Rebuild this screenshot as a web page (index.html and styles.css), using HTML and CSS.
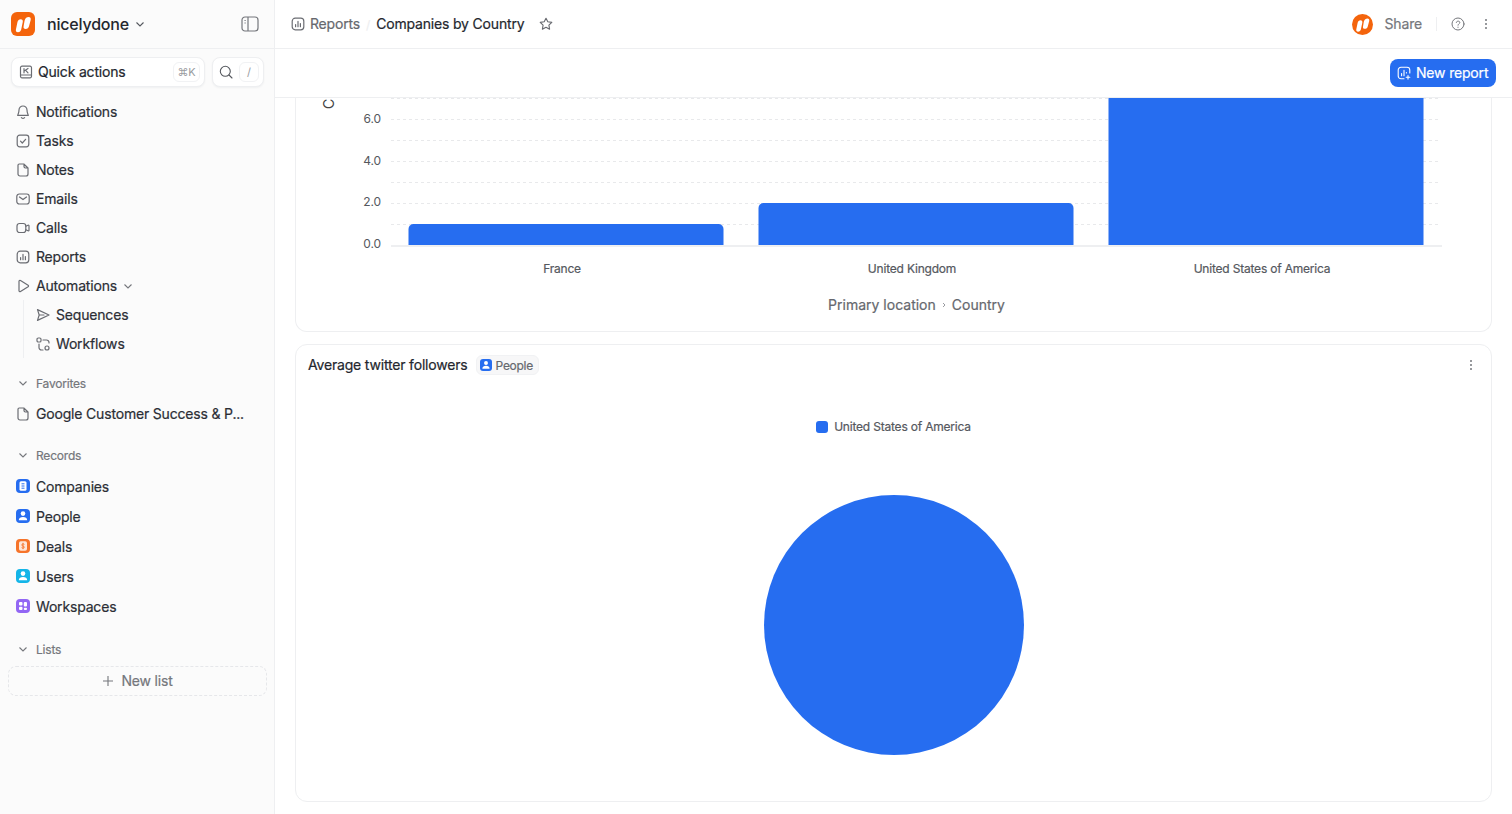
FILE: index.html
```html
<!DOCTYPE html>
<html>
<head>
    <meta charset="utf-8">
    <title>Companies by Country</title>
    <link rel="stylesheet" href="styles.css">
</head>
<body>
    <svg class="sprites" width="0" height="0">
        <defs>
            <symbol id="i-note" viewBox="0 0 14 14"><path d="M3.2 1h4.6L12 5v6a2 2 0 0 1-2 2H4a2 2 0 0 1-2-2V2.2A1.2 1.2 0 0 1 3.2 1zM8 1v2.6A1.4 1.4 0 0 0 9.4 5H12" /></symbol>
            <symbol id="i-report" viewBox="0 0 14 14"><rect x="1.2" y="1.2" width="11.6" height="11.6" rx="3" /><path d="M4.6 7.5v2.200M7 4.400v5.300M9.400 6.500v3.200" /></symbol>
            <symbol id="i-chev" viewBox="0 0 10 10"><path d="M1.500 3.500 5 7l3.500-3.500" /></symbol>
            <symbol id="i-person" viewBox="0 0 14 14"><circle cx="7" cy="4.600" r="2.300" /><path d="M2.800 11.300c0-2.200 1.800-3.300 4.200-3.300s4.200 1.100 4.200 3.300z" /></symbol>
            <symbol id="i-logo" viewBox="1.500 1.500 20 20"><path d="M7.300 18.300c-1.400 0-2-.8-1.700-2.200l1.300-6.200c.3-1.500 1.300-2.400 2.700-2.400s2 .9 1.700 2.400l-1.300 6.200c-.3 1.400-1.300 2.200-2.700 2.200zM13.700 15.600c-1.400 0-2-.9-1.700-2.300l.8-4.600c.5-2.100 2-3 3.300-3 1.500 0 2.100 1 1.800 2.400l-1.400 5.300c-.3 1.400-1.300 2.200-2.800 2.200z" /></symbol>
        </defs>
    </svg>

    <div class="app">
        <aside class="sidebar">
            <div class="workspace">
                <span class="logo"><svg><use href="#i-logo" /></svg></span>
                <span class="workspace-name">nicelydone</span>
                <svg class="chev chev-dark"><use href="#i-chev" /></svg>
                <svg class="panel-toggle" viewBox="0 0 18 16"><rect x="1" y="1" width="16" height="14" rx="3" /><path d="M7 1v14M3.500 4.500h1.200M3.500 7h1.200" /></svg>
            </div>

            <div class="quick-row">
                <div class="quick-box quick-actions">
                    <svg class="icon" viewBox="0 0 14 14"><path d="M3 1.200h8a1.500 1.500 0 0 1 1.500 1.500v8.600a1.500 1.500 0 0 1-1.500 1.500H3a1.500 1.500 0 0 1-1.500-1.500V2.700A1.500 1.500 0 0 1 3 1.200zM1.500 10h11M5 3.500v4.300M9 3.500 5.200 6M6.500 5.200 9 7.800" /></svg>
                    <span class="quick-label nudge">Quick actions</span>
                    <span class="kbd kbd-wide">⌘K</span>
                </div>
                <div class="quick-box quick-search">
                    <svg class="search-icon" viewBox="0 0 14 14"><circle cx="6.300" cy="6.300" r="5" /><path d="m10 10 3 3" /></svg>
                    <span class="kbd kbd-slash">/</span>
                </div>
            </div>

            <nav class="nav">
                <a class="nav-item"><svg class="icon" viewBox="0 0 14 14"><path d="M7 1a4 4 0 0 0-4 4c0 3.500-1.300 4.600-1.300 5.400h10.600C12.300 9.600 11 8.500 11 5a4 4 0 0 0-4-4zM5.400 12.600c.8.700 2.400.7 3.200 0" /></svg>Notifications</a>
                <a class="nav-item"><svg class="icon" viewBox="0 0 14 14"><rect x="1.200" y="1.200" width="11.600" height="11.600" rx="2.500" /><path d="m4.500 7.200 1.800 1.800 3.300-3.700" /></svg>Tasks</a>
                <a class="nav-item"><svg class="icon"><use href="#i-note" /></svg>Notes</a>
                <a class="nav-item"><svg class="icon" viewBox="0 0 14 14"><rect x=".8" y="2" width="12.400" height="10" rx="2.500" /><path d="m3.500 5 3.500 2.600L10.500 5" /></svg>Emails</a>
                <a class="nav-item"><svg class="icon" viewBox="0 0 14 14"><rect x="1" y="2.500" width="8.800" height="9" rx="2.500" /><path d="M9.800 5.300 12 4.200c.5-.2 1 .1 1 .6v4.400c0 .5-.5.800-1 .6L9.800 8.700" /></svg>Calls</a>
                <a class="nav-item"><svg class="icon"><use href="#i-report" /></svg>Reports</a>
                <a class="nav-item"><svg class="icon" viewBox="0 0 14 14"><path d="M3 2.300v9.400c0 .8.800 1.200 1.500.8l7.600-4.700c.6-.4.600-1.200 0-1.600L4.500 1.500C3.800 1.100 3 1.500 3 2.300z" /></svg>Automations<svg class="chev"><use href="#i-chev" /></svg></a>
                <div class="subnav">
                    <a class="nav-item"><svg class="icon" viewBox="0 0 14 14"><path d="M1.500 1.600 13 7 1.500 12.400 3.200 7zM3.200 7H8" /></svg>Sequences</a>
                    <a class="nav-item"><svg class="icon" viewBox="0 0 14 14"><rect x="1" y="1" width="4" height="4" rx="1.300" /><circle cx="11" cy="11" r="2" /><path d="M7 3h3.500A2.500 2.500 0 0 1 13 5.500V6M3 7v3.500A2.500 2.500 0 0 0 5.500 13H7" /></svg>Workflows</a>
                </div>
            </nav>

            <div class="section-title section-favorites"><svg class="chev"><use href="#i-chev" /></svg>Favorites</div>
            <a class="nav-item nav-fav"><svg class="icon"><use href="#i-note" /></svg><span class="ellipsis">Google Customer Success &amp; P...</span></a>

            <div class="section-title section-records"><svg class="chev"><use href="#i-chev" /></svg>Records</div>
            <div class="records">
                <a class="record"><span class="badge badge-blue"><svg viewBox="0 0 14 14"><rect x="3.500" y="2.200" width="7" height="9.600" rx="1.500" class="solid" /><path d="M5.500 4.800h3M5.500 7h3M5.500 9.200h3" class="cut" /></svg></span>Companies</a>
                <a class="record"><span class="badge badge-blue"><svg><use href="#i-person" class="solid" /></svg></span>People</a>
                <a class="record"><span class="badge badge-orange"><svg viewBox="0 0 14 14"><rect x="3" y="2.200" width="8" height="9.600" rx="1.800" class="solid-soft" /><path d="M8.400 5.400C7.800 4.700 5.700 4.700 5.700 6s2.700 .9 2.700 2.100-2.100 1.300-2.800 .5M7 3.800v6.400" class="cut-orange" /></svg></span>Deals</a>
                <a class="record"><span class="badge badge-cyan"><svg><use href="#i-person" class="solid" /></svg></span>Users</a>
                <a class="record"><span class="badge badge-purple"><svg viewBox="0 0 14 14"><rect x="3" y="3" width="3.500" height="3.500" rx="1" class="solid" /><rect x="7.800" y="3" width="3.200" height="4.500" rx="1" class="solid" /><rect x="3" y="7.800" width="3.500" height="3.200" rx="1" class="solid" /><rect x="7.800" y="8.700" width="3.200" height="2.300" rx="1" class="solid" /></svg></span>Workspaces</a>
            </div>

            <div class="section-title section-lists"><svg class="chev"><use href="#i-chev" /></svg>Lists</div>
            <div class="new-list"><svg class="plus" viewBox="0 0 12 12"><path d="M6 1v10M1 6h10" /></svg><span class="nudge">New list</span></div>
        </aside>

        <main class="main">
            <header class="topbar">
                <svg class="icon"><use href="#i-report" /></svg>
                <span class="crumb nudge">Reports</span>
                <span class="crumb-sep">/</span>
                <span class="crumb-current nudge">Companies by Country</span>
                <svg class="star" viewBox="0 0 14 14"><path d="m7 1.200 1.800 3.600 4 .6-2.900 2.800.7 4L7 10.300l-3.600 1.900.7-4L1.200 5.400l4-.6z" /></svg>
                <div class="topbar-right">
                    <span class="avatar"><svg><use href="#i-logo" /></svg></span>
                    <span class="share nudge">Share</span>
                    <span class="topbar-divider"></span>
                    <svg class="help" viewBox="0 0 14 14"><circle cx="7" cy="7" r="6" /><path d="M5.300 5.400C5.500 3.600 8.800 3.700 8.800 5.500 8.800 6.800 7 6.900 7 8.200M7 10.100v.3" /></svg>
                    <span class="dots"><i></i><i></i><i></i></span>
                </div>
            </header>

            <div class="toolbar">
                <button class="btn-primary"><svg viewBox="0 0 14 14"><path d="M7 12.800H4a2.800 2.800 0 0 1-2.800-2.800V4A2.800 2.800 0 0 1 4 1.200h6A2.800 2.800 0 0 1 12.800 4v3M4.600 7.500v2.200M7 4.400v5.300M9.400 6.500v.5M11 9.500v3.600M9.200 11.300h3.600" /></svg><span class="nudge">New report</span></button>
            </div>

            <div class="content">
                <section class="card card-chart">
                    <svg class="bar-chart" viewBox="0 0 1195 170" width="1195" height="170">
                        <text class="axis-title" transform="translate(38 6) rotate(-90)" text-anchor="middle">C</text>
                        <g class="grid">
                            <line x1="95" x2="1142" y1="0.500" y2="0.500" />
                            <line x1="95" x2="1142" y1="21.500" y2="21.500" />
                            <line x1="95" x2="1142" y1="42.500" y2="42.500" />
                            <line x1="95" x2="1142" y1="63.500" y2="63.500" />
                            <line x1="95" x2="1142" y1="84.500" y2="84.500" />
                            <line x1="95" x2="1142" y1="105.500" y2="105.500" />
                            <line x1="95" x2="1142" y1="126.500" y2="126.500" />
                        </g>
                        <line class="baseline" x1="95" x2="1146" y1="148" y2="148" />
                        <g class="y-labels">
                            <text x="85" y="25">6.0</text>
                            <text x="85" y="66.500">4.0</text>
                            <text x="85" y="108">2.0</text>
                            <text x="85" y="149.500">0.0</text>
                        </g>
                        <path class="bar" d="M112.500 147v-16a5 5 0 0 1 5-5h305a5 5 0 0 1 5 5v16z" />
                        <path class="bar" d="M462.500 147v-37a5 5 0 0 1 5-5h305a5 5 0 0 1 5 5v37z" />
                        <rect class="bar" x="812.500" y="0" width="315" height="147" />
                    </svg>
                    <div class="x-labels">
                        <span>France</span>
                        <span>United Kingdom</span>
                        <span>United States of America</span>
                    </div>
                    <div class="x-title">Primary location<svg viewBox="0 0 6 8"><path d="m2 2 2 2-2 2" /></svg>Country</div>
                </section>

                <section class="card card-pie">
                    <div class="card-head">
                        <span class="card-title nudge">Average twitter followers</span>
                        <span class="tag"><span class="badge badge-blue badge-small"><svg><use href="#i-person" class="solid" /></svg></span>People</span>
                        <span class="dots dots-card"><i></i><i></i><i></i></span>
                    </div>
                    <div class="legend"><span class="legend-swatch"></span>United States of America</div>
                    <div class="pie"></div>
                </section>
            </div>
        </main>
    </div>
</body>
</html>
```

FILE: styles.css
```css
* {
    box-sizing: border-box;
}
html, body {
    height: 100%;
}
body {
    margin: 0;
    background-color: #fff;
    color: #24272e;
    font-family: Inter, "Liberation Sans", sans-serif;
    font-size: 14px;
    letter-spacing: -0.18px;
    -webkit-text-stroke: 0.2px;
    overflow: hidden;
}
svg {
    display: block;
    flex: none;
}
.sprites {
    position: absolute;
}
.nudge {
    margin-top: -1px;
}
.app {
    display: flex;
    height: 814px;
}

/* sidebar */
.sidebar {
    width: 275px;
    flex: none;
    background-color: #fbfbfb;
    border-right: 1px solid #eeeff1;
    display: flex;
    flex-direction: column;
}
.workspace {
    height: 49px;
    flex: none;
    display: flex;
    align-items: center;
    padding: 0 15px 0 11px;
    border-bottom: 1px solid #eeeff1;
}
.logo {
    width: 24px;
    height: 24px;
    border-radius: 6px;
    background-color: #f4640c;
}
.logo svg {
    width: 24px;
    height: 24px;
    fill: #fff;
}
.workspace-name {
    margin-left: 12px;
    font-size: 16px;
    font-weight: 500;
    letter-spacing: -0.2px;
    -webkit-text-stroke: 0;
}
.chev {
    width: 10px;
    height: 10px;
    fill: none;
    stroke: #75777c;
    stroke-width: 1.100;
}
.chev-dark {
    margin-left: 6px;
    stroke: #55585e;
}
.panel-toggle {
    width: 18px;
    height: 16px;
    margin-left: auto;
    fill: none;
    stroke: #75777c;
    stroke-width: 1.200;
}
.icon {
    width: 14px;
    height: 14px;
    fill: none;
    stroke: #6b6d73;
    stroke-width: 1.200;
    stroke-linecap: round;
    stroke-linejoin: round;
}
.quick-row {
    display: flex;
    gap: 7px;
    padding: 8px 10px 0 11px;
}
.quick-box {
    height: 30px;
    display: flex;
    align-items: center;
    background-color: #fff;
    border: 1px solid #eeeff1;
    border-radius: 8px;
    box-shadow: 0 1px 2px rgba(28, 40, 64, 0.05);
}
.quick-actions {
    width: 194px;
    padding: 0 4px 0 7px;
}
.quick-label {
    margin-left: 5px;
}
.kbd {
    display: flex;
    align-items: center;
    justify-content: center;
    height: 20px;
    border: 1px solid #f1f2f4;
    border-radius: 6px;
    color: #9a9ca1;
    font-size: 11px;
    -webkit-text-stroke: 0;
}
.kbd-wide {
    width: 27px;
    margin-left: auto;
}
.quick-search {
    width: 52px;
    padding: 0 4px 0 6px;
    justify-content: space-between;
}
.search-icon {
    width: 14px;
    height: 14px;
    fill: none;
    stroke: #55585e;
    stroke-width: 1.100;
    stroke-linecap: round;
}
.kbd-slash {
    width: 20px;
}
.nav {
    padding-top: 10px;
}
.nav-item {
    height: 29px;
    display: flex;
    align-items: center;
    gap: 7px;
    padding-left: 15px;
    color: #2b2e35;
    white-space: nowrap;
}
.nav-item .icon {
    margin-left: 1px;
    margin-right: -1px;
}
.nav-item .chev {
    margin-left: -1px;
}
.subnav {
    margin-left: 23px;
    border-left: 1px solid #eeeff1;
}
.subnav .nav-item {
    padding-left: 11px;
}
.section-title {
    height: 20px;
    display: flex;
    align-items: center;
    gap: 8px;
    padding-left: 18px;
    color: #75777c;
    font-size: 12px;
    letter-spacing: -0.2px;
}
.section-favorites {
    margin-top: 15px;
}
.nav-fav {
    margin-top: 6px;
}
.section-records {
    margin-top: 17px;
}
.records {
    margin-top: 6px;
}
.record {
    height: 30px;
    display: flex;
    align-items: center;
    gap: 6px;
    padding-left: 16px;
    color: #2b2e35;
}
.badge {
    width: 14px;
    height: 14px;
    border-radius: 4px;
    display: block;
    flex: none;
}
.badge svg {
    width: 14px;
    height: 14px;
}
.badge-blue {
    background-color: #266df0;
}
.badge-orange {
    background-color: #f6742a;
}
.badge-cyan {
    background-color: #14b5e8;
}
.badge-purple {
    background-color: #9266f4;
}
.solid {
    fill: #fff;
    stroke: none;
}
.solid-soft {
    fill: #fde6d8;
}
.cut {
    fill: none;
    stroke: #266df0;
    stroke-width: 1;
}
.cut-orange {
    fill: none;
    stroke: #f6742a;
    stroke-width: 0.900;
}
.section-lists {
    margin-top: 18px;
}
.new-list {
    height: 30px;
    margin: 7px 7px 0 8px;
    display: flex;
    align-items: center;
    justify-content: center;
    gap: 7px;
    border: 1px dashed #e6e7ea;
    border-radius: 8px;
    color: #75777c;
}
.plus {
    width: 12px;
    height: 12px;
    fill: none;
    stroke: #75777c;
    stroke-width: 1.100;
}

/* main */
.main {
    flex: 1;
    min-width: 0;
    display: flex;
    flex-direction: column;
}
.topbar {
    height: 49px;
    flex: none;
    display: flex;
    align-items: center;
    padding: 0 25px 0 16px;
    border-bottom: 1px solid #eeeff1;
}
.crumb {
    margin-left: 5px;
    color: #66686e;
}
.crumb-sep {
    margin: 0 6px;
    color: #eeeff1;
    font-size: 12px;
}
.star {
    width: 14px;
    height: 14px;
    margin-left: 15px;
    fill: none;
    stroke: #66686e;
    stroke-width: 1.100;
    stroke-linejoin: round;
}
.topbar-right {
    margin-left: auto;
    display: flex;
    align-items: center;
}
.avatar {
    width: 21px;
    height: 21px;
    border-radius: 50%;
    background-color: #f4640c;
}
.avatar svg {
    width: 21px;
    height: 21px;
    fill: #fff;
}
.share {
    margin-left: 12px;
    color: #75777c;
}
.topbar-divider {
    width: 1px;
    height: 14px;
    margin: 0 14px;
    background-color: #eeeff1;
}
.help {
    width: 14px;
    height: 14px;
    fill: none;
    stroke: #75777c;
    stroke-width: 1;
    stroke-linecap: round;
}
.dots {
    display: flex;
    flex-direction: column;
    gap: 2px;
    margin-left: 20px;
    width: 2px;
}
.dots i {
    display: block;
    width: 2px;
    height: 2px;
    border-radius: 50%;
    background-color: #75777c;
}
.toolbar {
    height: 49px;
    flex: none;
    display: flex;
    align-items: center;
    justify-content: flex-end;
    padding: 0 16px 0 0;
    border-bottom: 1px solid #eeeff1;
}
.btn-primary {
    height: 28px;
    width: 106px;
    display: flex;
    align-items: center;
    gap: 5px;
    padding: 0 0 0 7px;
    border: none;
    border-radius: 8px;
    background-color: #266df0;
    color: #fff;
    font-family: inherit;
    font-size: 14px;
    letter-spacing: -0.18px;
    white-space: nowrap;
}
.btn-primary svg {
    width: 14px;
    height: 14px;
    fill: none;
    stroke: #fff;
    stroke-width: 1.100;
    stroke-linecap: round;
    stroke-linejoin: round;
}
.content {
    flex: 1;
    min-height: 0;
    overflow: hidden;
    padding: 0 20px;
}
.card {
    background-color: #fff;
    border: 1px solid #eeeff1;
    border-radius: 12px;
}
.card-chart {
    height: 234px;
    border-top: none;
    border-top-left-radius: 0;
    border-top-right-radius: 0;
}
.bar-chart {
    font-size: 12px;
    letter-spacing: -0.1px;
}
.axis-title {
    fill: #444;
    font-size: 14px;
}
.grid line {
    stroke: #e8e9eb;
    stroke-dasharray: 3 3;
}
.baseline {
    stroke: #eeeff1;
    stroke-width: 2;
}
.y-labels text {
    fill: #55585e;
    text-anchor: end;
}
.bar {
    fill: #266df0;
}
.x-labels {
    display: grid;
    grid-template-columns: 350px 350px 350px;
    margin-left: 91px;
    margin-top: -7px;
    color: #55585e;
    font-size: 12px;
    letter-spacing: -0.2px;
    line-height: 16px;
    text-align: center;
}
.x-title {
    display: flex;
    justify-content: center;
    align-items: center;
    gap: 5px;
    margin-top: 19px;
    margin-left: 46px;
    color: #66686e;
    font-size: 14px;
    letter-spacing: 0;
}
.x-title svg {
    width: 6px;
    height: 8px;
    fill: none;
    stroke: #9a9ca1;
}
.card-pie {
    height: 458px;
    margin-top: 12px;
    display: flex;
    flex-direction: column;
}
.card-head {
    height: 40px;
    flex: none;
    display: flex;
    align-items: center;
    padding: 0 19px 0 12px;
}
.tag {
    display: flex;
    align-items: center;
    gap: 4px;
    height: 20px;
    margin-left: 8px;
    padding: 0 5px 0 3px;
    background-color: #f7f7f8;
    border: 1px solid #f1f2f4;
    border-radius: 6px;
    color: #66686e;
    font-size: 12px;
    letter-spacing: -0.3px;
}
.badge-small {
    width: 12px;
    height: 12px;
    border-radius: 3px;
}
.badge-small svg {
    width: 12px;
    height: 12px;
}
.dots-card {
    margin-left: auto;
}
.legend {
    display: flex;
    align-items: center;
    justify-content: center;
    gap: 6px;
    margin-top: 34px;
    color: #55585e;
    font-size: 12px;
    letter-spacing: -0.2px;
    line-height: 16px;
}
.legend-swatch {
    width: 12px;
    height: 12px;
    border-radius: 3px;
    background-color: #266df0;
}
.pie {
    width: 260px;
    height: 260px;
    margin: 60px auto 0;
    border-radius: 50%;
    background-color: #266df0;
}
```
